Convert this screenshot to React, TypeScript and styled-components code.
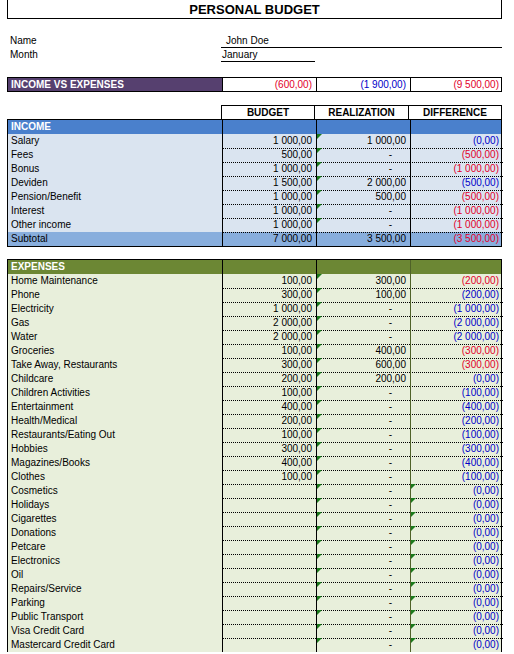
import React from "react";
import styled, { createGlobalStyle } from "styled-components";

const G = createGlobalStyle`
  body { margin: 0; background: #fff; font-family: "Liberation Sans", Arial, sans-serif; font-size: 10px; color: #000; }
`;

const Page = styled.div`
  width: 495px;
  padding: 0 0 0 7px;
  display: flex;
  flex-direction: column;
`;
const Title = styled.div`
  height: 18px;
  border: 1px solid #000;
  border-top: none;
  font-weight: bold;
  font-size: 13px;
  display: flex;
  align-items: center;
  justify-content: center;
`;
const InfoGrid = styled.div`
  margin-top: 15px;
  display: grid;
  grid-template-columns: 214px 94px 187px;
  grid-auto-rows: 14px;
`;
const InfoLabel = styled.div`
  line-height: 14px;
  padding-left: 3px;
`;
const InfoValue = styled.div<{ $span: number; $pad: number }>`
  grid-column: span ${(p) => p.$span};
  border-bottom: 1px solid #000;
  padding-left: ${(p) => p.$pad}px;
  line-height: 13px;
`;
const Row = styled.div<{ $bg?: string }>`
  display: grid;
  grid-template-columns: 214px 94px 94px 93px;
  height: 14px;
  background: ${(p) => p.$bg || "transparent"};
`;
const Section = styled.div<{ $mt: number }>`
  margin-top: ${(p) => p.$mt}px;
  border: 1.5px solid #000;
  display: flex;
  flex-direction: column;
`;
const Label = styled.div<{ $head?: boolean }>`
  padding-left: 3px;
  line-height: 14px;
  white-space: nowrap;
  overflow: hidden;
  font-weight: ${(p) => (p.$head ? "bold" : "normal")};
  color: ${(p) => (p.$head ? "#fff" : "#000")};
`;
const Cell = styled.div<{
  $color?: string;
  $left?: string;
  $dotted?: boolean;
  $dash?: boolean;
  $mark?: boolean;
}>`
  position: relative;
  border-left: 1.5px solid ${(p) => p.$left || "#000"};
  border-bottom: ${(p) => (p.$dotted ? "1px dotted #000" : "none")};
  text-align: right;
  padding-right: ${(p) => (p.$dash ? 18 : 4)}px;
  line-height: 14px;
  box-sizing: border-box;
  color: ${(p) => p.$color || "#000"};
  &::before {
    content: "";
    display: ${(p) => (p.$mark ? "block" : "none")};
    position: absolute;
    left: 0;
    top: 0;
    border-top: 5px solid #1c7a1c;
    border-right: 5px solid transparent;
  }
`;
const Header = styled.div`
  margin-top: 13px;
  display: grid;
  grid-template-columns: 214px 94px 94px 93px;
  height: 14px;
`;
const HeadCell = styled.div<{ $first?: boolean }>`
  border-top: 1.5px solid #000;
  border-right: 1.5px solid #000;
  border-left: ${(p) => (p.$first ? "1.5px solid #000" : "none")};
  font-weight: bold;
  text-align: center;
  line-height: 13px;
`;
const IvE = styled.div`
  margin-top: 15px;
  display: grid;
  grid-template-columns: 214px 94px 94px 93px;
  height: 13px;
  border: 1.5px solid #000;
`;
const IvELabel = styled.div`
  background: #56406f;
  color: #fff;
  font-weight: bold;
  padding-left: 3px;
  line-height: 13px;
`;
const IvEValue = styled.div<{ $color: string }>`
  border-left: 1.5px solid #000;
  text-align: right;
  padding-right: 4px;
  line-height: 13px;
  color: ${(p) => p.$color};
`;

const RED = "#e2002a";
const BLUE = "#0000c8";

type R = [string, string, string, string, string];
const income: R[] = [
  ["Salary", "1 000,00", "1 000,00", "(0,00)", BLUE],
  ["Fees", "500,00", "-", "(500,00)", RED],
  ["Bonus", "1 000,00", "-", "(1 000,00)", RED],
  ["Deviden", "1 500,00", "2 000,00", "(500,00)", BLUE],
  ["Pension/Benefit", "1 000,00", "500,00", "(500,00)", RED],
  ["Interest", "1 000,00", "-", "(1 000,00)", RED],
  ["Other income", "1 000,00", "-", "(1 000,00)", RED],
];

const exp: R[] = [
  ["Home Maintenance", "100,00", "300,00", "(200,00)", RED],
  ["Phone", "300,00", "100,00", "(200,00)", BLUE],
  ["Electricity", "1 000,00", "-", "(1 000,00)", BLUE],
  ["Gas", "2 000,00", "-", "(2 000,00)", BLUE],
  ["Water", "2 000,00", "-", "(2 000,00)", BLUE],
  ["Groceries", "100,00", "400,00", "(300,00)", RED],
  ["Take Away, Restaurants", "300,00", "600,00", "(300,00)", RED],
  ["Childcare", "200,00", "200,00", "(0,00)", BLUE],
  ["Children Activities", "100,00", "-", "(100,00)", BLUE],
  ["Entertainment", "400,00", "-", "(400,00)", BLUE],
  ["Health/Medical", "200,00", "-", "(200,00)", BLUE],
  ["Restaurants/Eating Out", "100,00", "-", "(100,00)", BLUE],
  ["Hobbies", "300,00", "-", "(300,00)", BLUE],
  ["Magazines/Books", "400,00", "-", "(400,00)", BLUE],
  ["Clothes", "100,00", "-", "(100,00)", BLUE],
  ...[
    "Cosmetics", "Holidays", "Cigarettes", "Donations", "Petcare", "Electronics", "Oil",
    "Repairs/Service", "Parking", "Public Transport", "Visa Credit Card", "Mastercard Credit Card",
  ].map((n) => [n, "", "-", "(0,00)", BLUE] as R),
];

export default function App() {
  return (
    <Page>
      <G />
      <Title>PERSONAL BUDGET</Title>
      <InfoGrid>
        <InfoLabel>Name</InfoLabel>
        <InfoValue $span={2} $pad={5}>John Doe</InfoValue>
        <InfoLabel>Month</InfoLabel>
        <InfoValue $span={1} $pad={1}>January</InfoValue>
      </InfoGrid>
      <IvE>
        <IvELabel>INCOME VS EXPENSES</IvELabel>
        <IvEValue $color={RED}>(600,00)</IvEValue>
        <IvEValue $color={BLUE}>(1 900,00)</IvEValue>
        <IvEValue $color={RED}>(9 500,00)</IvEValue>
      </IvE>
      <Header>
        <div />
        <HeadCell $first>BUDGET</HeadCell>
        <HeadCell>REALIZATION</HeadCell>
        <HeadCell>DIFFERENCE</HeadCell>
      </Header>
      <Section $mt={0}>
        <Row $bg="#4a80cc">
          <Label $head>INCOME</Label>
          <Cell />
          <Cell />
          <Cell />
        </Row>
        {income.map((r) => (
          <Row key={r[0]} $bg="#dae4f0">
            <Label>{r[0]}</Label>
            <Cell $dotted>{r[1]}</Cell>
            <Cell $dotted $mark $dash={r[2] === "-"}>{r[2]}</Cell>
            <Cell $dotted $color={r[4]}>{r[3]}</Cell>
          </Row>
        ))}
        <Row $bg="#88aedd">
          <Label>Subtotal</Label>
          <Cell>7 000,00</Cell>
          <Cell>3 500,00</Cell>
          <Cell $color={RED}>(3 500,00)</Cell>
        </Row>
      </Section>
      <Section $mt={12} style={{ borderBottom: "none" }}>
        <Row $bg="#6c8734">
          <Label $head>EXPENSES</Label>
          <Cell />
          <Cell />
          <Cell $left="#4f6228" />
        </Row>
        {exp.map((r) => (
          <Row key={r[0]} $bg="#e8efdb">
            <Label>{r[0]}</Label>
            <Cell $dotted>{r[1]}</Cell>
            <Cell $dotted $mark $dash={r[2] === "-"}>{r[2]}</Cell>
            <Cell $dotted $left="#4f6228" $mark={r[1] === ""} $color={r[4]}>{r[3]}</Cell>
          </Row>
        ))}
      </Section>
    </Page>
  );
}
